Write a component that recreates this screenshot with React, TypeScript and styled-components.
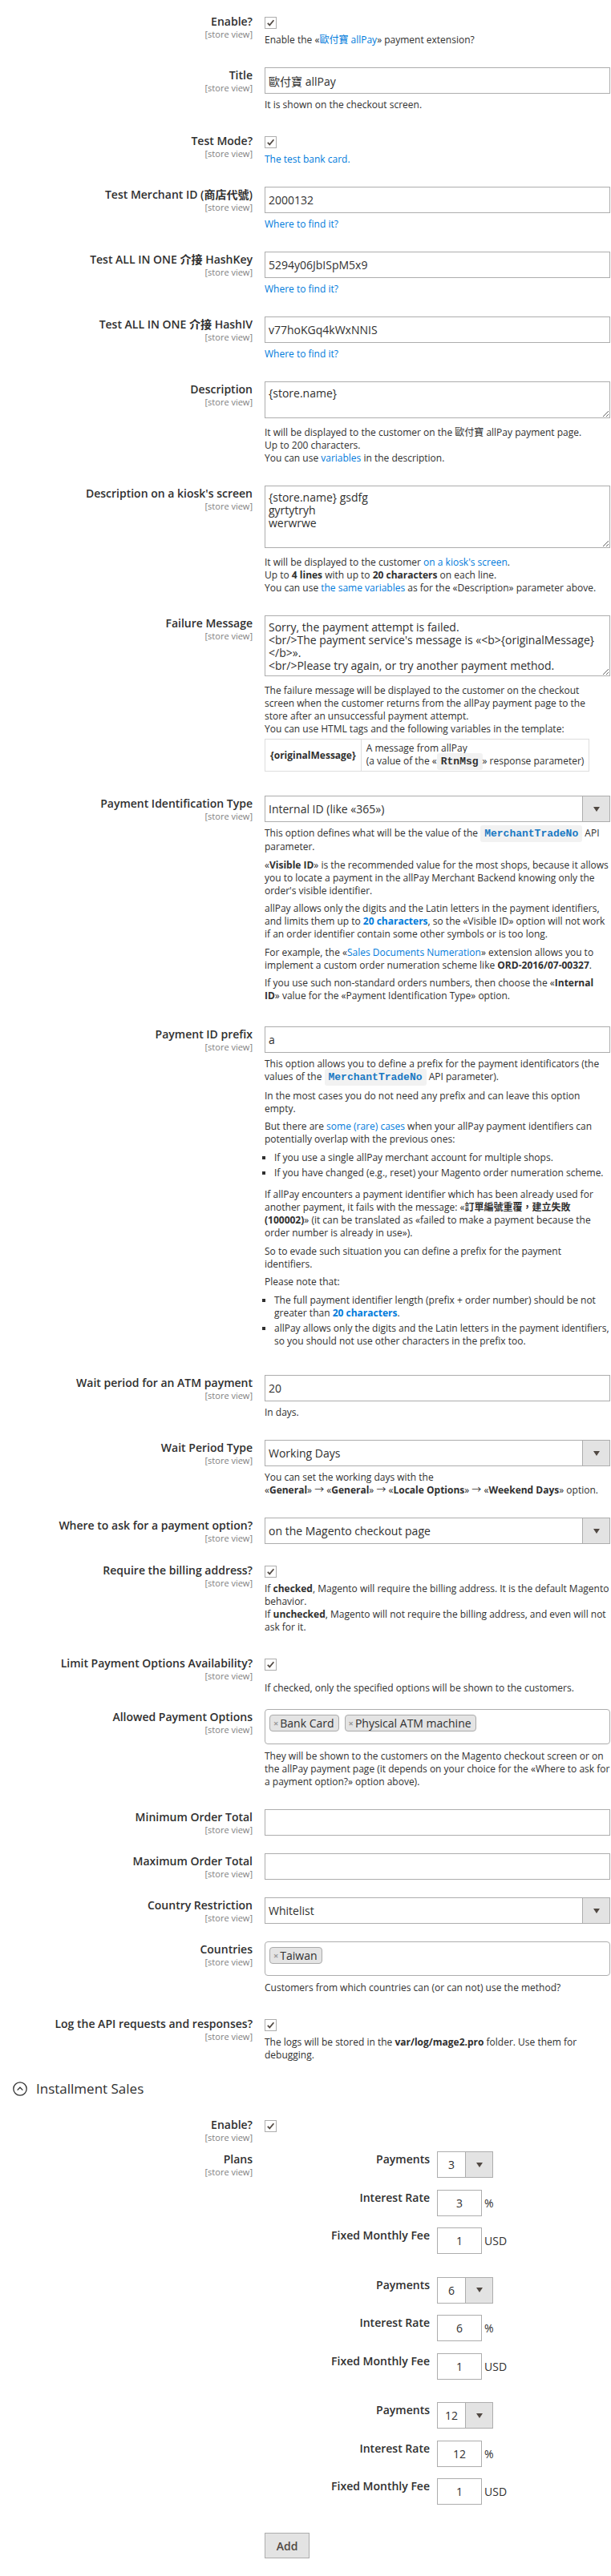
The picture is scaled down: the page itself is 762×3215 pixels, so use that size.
import React from 'react';
import styled, { createGlobalStyle } from 'styled-components';

const GlobalStyle = createGlobalStyle`
  html, body {
    margin: 0;
    padding: 0;
    background: #fff;
  }
  body {
    font-family: 'Open Sans', 'Noto Sans CJK TC', sans-serif;
    color: #303030;
  }
`;

const Page = styled.div`
  width: 762px;
  box-sizing: border-box;
  padding: 16px 1px 23px 0;
`;

const Row = styled.div<{ $gap?: number }>`
  display: grid;
  grid-template-columns: 315px 1fr;
  column-gap: 15px;
  padding-bottom: ${(p) => p.$gap ?? 22}px;
`;

const LabelCol = styled.div<{ $check?: boolean }>`
  text-align: right;
  padding-top: ${(p) => (p.$check ? 2 : 1)}px;
`;

const Label = styled.div`
  font-size: 14px;
  font-weight: 600;
  line-height: 18px;
  color: #303030;
`;

const Scope = styled.div`
  font-size: 11px;
  line-height: 13px;
  color: #808080;
`;

const Control = styled.div`
  display: flex;
  flex-direction: column;
  min-width: 0;
`;

const TextInput = styled.input`
  display: block;
  width: 100%;
  height: 33px;
  box-sizing: border-box;
  border: 1px solid #adadad;
  border-radius: 0;
  padding: 0 4px;
  margin: 0;
  font-family: 'Open Sans', 'Noto Sans CJK TC', sans-serif;
  font-size: 14px;
  color: #303030;
  background: #fff;
  outline: none;
`;

const TextArea = styled.textarea<{ $h: number }>`
  display: block;
  width: 100%;
  height: ${(p) => p.$h}px;
  box-sizing: border-box;
  border: 1px solid #adadad;
  border-radius: 0;
  padding: 6px 4px 4px;
  margin: 0 0 4px;
  font-family: 'Open Sans', 'Noto Sans CJK TC', sans-serif;
  font-size: 14px;
  line-height: 16px;
  color: #303030;
  white-space: pre;
  overflow: hidden;
  resize: vertical;
  outline: none;
`;

const Note = styled.div<{ $top?: number }>`
  margin: ${(p) => p.$top ?? 6}px 0 4px;
  font-size: 12px;
  line-height: 16px;
  color: #303030;

  p {
    margin: 0 0 6.5px;
  }
  p:last-child {
    margin-bottom: 4px;
  }
  ul {
    margin: 0 0 11px;
    padding-left: 12px;
    list-style-type: square;
  }
  ul:last-child {
    margin-bottom: 8px;
  }
  li {
    margin-bottom: 3.5px;
  }
  li:last-child {
    margin-bottom: 0;
  }
  b {
    font-weight: 700;
  }
`;

const Link = styled.a<{ $bold?: boolean }>`
  color: #007bdb;
  text-decoration: none;
  font-weight: ${(p) => (p.$bold ? 700 : 400)};
`;

const Code = styled.code<{ $blue?: boolean }>`
  font-family: 'Liberation Mono', monospace;
  font-size: 13px;
  font-weight: 700;
  color: ${(p) => (p.$blue ? '#1979c3' : '#303030')};
  background: #f2f2f2;
  padding: 3px 5px;
  border-radius: 3px;
`;

const VarTable = styled.table`
  border-collapse: collapse;
  margin: 4px 0;

  td {
    border: 1px solid #dedede;
    padding: 3px 6px;
    font-size: 12px;
    line-height: 16px;
    vertical-align: middle;
  }
  td:first-child {
    font-weight: 700;
  }
`;

const SelectBox = styled.div<{ $w?: number }>`
  display: flex;
  width: ${(p) => (p.$w ? `${p.$w}px` : '100%')};
  height: 33px;
  box-sizing: border-box;
  border: 1px solid #adadad;
  background: #fff;
`;

const SelectValue = styled.div<{ $center?: boolean }>`
  flex: 1;
  padding: 0 4px;
  font-size: 14px;
  line-height: 31px;
  color: #303030;
  text-align: ${(p) => (p.$center ? 'center' : 'left')};
  white-space: nowrap;
`;

const SelectArrow = styled.div`
  width: 33px;
  border-left: 1px solid #adadad;
  background: #e3e3e3;
  display: flex;
  align-items: center;
  justify-content: center;
`;

const CheckBox = styled.span`
  display: flex;
  align-items: center;
  justify-content: center;
  width: 15px;
  height: 15px;
  box-sizing: border-box;
  margin-top: 5px;
  border: 1px solid #adadad;
  background: #fff;
`;

const MultiBox = styled.div<{ $h: number }>`
  display: flex;
  flex-wrap: wrap;
  align-content: flex-start;
  gap: 7px;
  height: ${(p) => p.$h}px;
  box-sizing: border-box;
  padding: 6px 5px;
  border: 1px solid #adadad;
  border-radius: 4px;
  background: #fff;
`;

const Chip = styled.span`
  display: inline-flex;
  align-items: center;
  height: 21px;
  box-sizing: border-box;
  padding: 0 5px 0 4px;
  border: 1px solid #aaa;
  border-radius: 4px;
  background: #e4e4e4;
  font-size: 14px;
  color: #303030;
`;

const ChipX = styled.span`
  color: #999;
  font-size: 11px;
  font-weight: 700;
  margin-right: 2px;
`;

const SectionTitle = styled.div`
  display: flex;
  align-items: center;
  gap: 11px;
  padding-left: 16px;
  margin-bottom: 24px;
  font-size: 17px;
  line-height: 20px;
  color: #303030;
`;

const PlanList = styled.div`
  display: flex;
  flex-direction: column;
  gap: 28.5px;
`;

const Plan = styled.div`
  display: flex;
  flex-direction: column;
  gap: 14.5px;
`;

const PlanRow = styled.div`
  display: grid;
  grid-template-columns: 206px auto;
  column-gap: 9px;
  align-items: start;
`;

const PlanLabel = styled.div`
  text-align: right;
  font-size: 14px;
  font-weight: 600;
  line-height: 18px;
  padding-top: 1px;
  color: #303030;
`;

const PlanControl = styled.div`
  display: flex;
  align-items: center;
  gap: 3px;
`;

const SmallInput = styled(TextInput)`
  width: 56px;
  text-align: center;
`;

const Unit = styled.span`
  font-size: 14px;
  color: #303030;
`;

const AddButton = styled.button`
  display: block;
  width: 56px;
  height: 32px;
  margin-top: 35px;
  padding: 0;
  border: 1px solid #adadad;
  border-radius: 0;
  background: #e3e3e3;
  font-family: 'Open Sans', sans-serif;
  font-size: 14px;
  font-weight: 600;
  color: #514943;
`;

const Arrow = () => (
  <svg width="8" height="6" viewBox="0 0 8 6">
    <polygon points="0,0 8,0 4,6" fill="#514943" />
  </svg>
);

const Check = () => (
  <svg width="11" height="11" viewBox="0 0 11 11">
    <polyline points="1.8,5.8 4.3,8.4 9.4,2.2" fill="none" stroke="#514943" strokeWidth="1.7" />
  </svg>
);

const Select: React.FC<{ value: string; w?: number; center?: boolean }> = ({ value, w, center }) => (
  <SelectBox $w={w}>
    <SelectValue $center={center}>{value}</SelectValue>
    <SelectArrow>
      <Arrow />
    </SelectArrow>
  </SelectBox>
);

const Field: React.FC<{
  label: React.ReactNode;
  check?: boolean;
  gap?: number;
  children?: React.ReactNode;
}> = ({ label, check, gap, children }) => (
  <Row $gap={gap}>
    <LabelCol $check={check}>
      <Label>{label}</Label>
      <Scope>[store view]</Scope>
    </LabelCol>
    <Control>{children}</Control>
  </Row>
);

const plans = [
  { payments: '3', rate: '3', fee: '1' },
  { payments: '6', rate: '6', fee: '1' },
  { payments: '12', rate: '12', fee: '1' },
];

const App: React.FC = () => {
  return (
    <Page>
      <GlobalStyle />

      <Field label="Enable?" check>
        <CheckBox><Check /></CheckBox>
        <Note>
          Enable the «<Link>歐付寶 allPay</Link>» payment extension?
        </Note>
      </Field>

      <Field label="Title">
        <TextInput defaultValue="歐付寶 allPay" />
        <Note>It is shown on the checkout screen.</Note>
      </Field>

      <Field label="Test Mode?" check>
        <CheckBox><Check /></CheckBox>
        <Note>
          <Link>The test bank card.</Link>
        </Note>
      </Field>

      <Field label="Test Merchant ID (商店代號)">
        <TextInput defaultValue="2000132" />
        <Note><Link>Where to find it?</Link></Note>
      </Field>

      <Field label="Test ALL IN ONE 介接 HashKey">
        <TextInput defaultValue="5294y06JbISpM5x9" />
        <Note><Link>Where to find it?</Link></Note>
      </Field>

      <Field label="Test ALL IN ONE 介接 HashIV">
        <TextInput defaultValue="v77hoKGq4kWxNNIS" />
        <Note><Link>Where to find it?</Link></Note>
      </Field>

      <Field label="Description">
        <TextArea $h={46} defaultValue="{store.name}" />
        <Note>
          It will be displayed to the customer on the 歐付寶 allPay payment page.
          <br />
          Up to 200 characters.
          <br />
          You can use <Link>variables</Link> in the description.
        </Note>
      </Field>

      <Field label="Description on a kiosk's screen">
        <TextArea $h={78} defaultValue={'{store.name} gsdfg\ngyrtytryh\nwerwrwe'} />
        <Note>
          It will be displayed to the customer <Link>on a kiosk's screen</Link>.
          <br />
          Up to <b>4 lines</b> with up to <b>20 characters</b> on each line.
          <br />
          You can use <Link>the same variables</Link> as for the «Description» parameter above.
        </Note>
      </Field>

      <Field label="Failure Message">
        <TextArea
          $h={76}
          wrap="off"
          defaultValue={
            'Sorry, the payment attempt is failed.\n<br/>The payment service\'s message is «<b>{originalMessage}\n</b>».\n<br/>Please try again, or try another payment method.'
          }
        />
        <Note>
          The failure message will be displayed to the customer on the checkout screen when the
          customer returns from the allPay payment page to the store after an unsuccessful payment
          attempt.
          <br />
          You can use HTML tags and the following variables in the template:
          <VarTable>
            <tbody>
              <tr>
                <td>{'{originalMessage}'}</td>
                <td>
                  A message from allPay
                  <br />
                  (a value of the «<Code>RtnMsg</Code>» response parameter)
                </td>
              </tr>
            </tbody>
          </VarTable>
        </Note>
      </Field>

      <Field label="Payment Identification Type">
        <Select value="Internal ID (like «365»)" />
        <Note>
          <p>
            This option defines what will be the value of the <Code $blue>MerchantTradeNo</Code> API
            parameter.
          </p>
          <p>
            «<b>Visible ID</b>» is the recommended value for the most shops, because it allows you
            to locate a payment in the allPay Merchant Backend knowing only the order's visible
            identifier.
          </p>
          <p>
            allPay allows only the digits and the Latin letters in the payment identifiers, and
            limits them up to <Link $bold>20 characters</Link>, so the «Visible ID» option will not
            work if an order identifier contain some other symbols or is too long.
          </p>
          <p>
            For example, the «<Link>Sales Documents Numeration</Link>» extension allows you to
            implement a custom order numeration scheme like <b>ORD-2016/07-00327</b>.
          </p>
          <p>
            If you use such non-standard orders numbers, then choose the «<b>Internal ID</b>» value
            for the «Payment Identification Type» option.
          </p>
        </Note>
      </Field>

      <Field label="Payment ID prefix">
        <TextInput defaultValue="a" />
        <Note>
          <p>
            This option allows you to define a prefix for the payment identificators (the values of
            the <Code $blue>MerchantTradeNo</Code> API parameter).
          </p>
          <p>In the most cases you do not need any prefix and can leave this option empty.</p>
          <p>
            But there are <Link>some (rare) cases</Link> when your allPay payment identifiers can
            potentially overlap with the previous ones:
          </p>
          <ul>
            <li>If you use a single allPay merchant account for multiple shops.</li>
            <li>If you have changed (e.g., reset) your Magento order numeration scheme.</li>
          </ul>
          <p>
            If allPay encounters a payment identifier which has been already used for another
            payment, it fails with the message: «<b>訂單編號重覆，建立失敗 (100002)</b>» (it can be
            translated as «failed to make a payment because the order number is already in use»).
          </p>
          <p>So to evade such situation you can define a prefix for the payment identifiers.</p>
          <p>Please note that:</p>
          <ul>
            <li>
              The full payment identifier length (prefix + order number) should be not greater than{' '}
              <Link $bold>20 characters</Link>.
            </li>
            <li>
              allPay allows only the digits and the Latin letters in the payment identifiers, so you
              should not use other characters in the prefix too.
            </li>
          </ul>
        </Note>
      </Field>

      <Field label="Wait period for an ATM payment">
        <TextInput defaultValue="20" />
        <Note>In days.</Note>
      </Field>

      <Field label="Wait Period Type">
        <Select value="Working Days" />
        <Note>
          You can set the working days with the
          <br />
          «<b>General</b>» → «<b>General</b>» → «<b>Locale Options</b>» → «<b>Weekend Days</b>»
          option.
        </Note>
      </Field>

      <Field label="Where to ask for a payment option?">
        <Select value="on the Magento checkout page" />
      </Field>

      <Field label="Require the billing address?" check>
        <CheckBox><Check /></CheckBox>
        <Note>
          If <b>checked</b>, Magento will require the billing address. It is the default Magento
          behavior.
          <br />
          If <b>unchecked</b>, Magento will not require the billing address, and even will not ask
          for it.
        </Note>
      </Field>

      <Field label="Limit Payment Options Availability?" check gap={14}>
        <CheckBox><Check /></CheckBox>
        <Note $top={14}>If checked, only the specified options will be shown to the customers.</Note>
      </Field>

      <Field label="Allowed Payment Options">
        <MultiBox $h={44}>
          <Chip><ChipX>×</ChipX>Bank Card</Chip>
          <Chip><ChipX>×</ChipX>Physical ATM machine</Chip>
        </MultiBox>
        <Note $top={7}>
          They will be shown to the customers on the Magento checkout screen or on the allPay
          payment page (it depends on your choice for the «Where to ask for a payment option?»
          option above).
        </Note>
      </Field>

      <Field label="Minimum Order Total">
        <TextInput defaultValue="" />
      </Field>

      <Field label="Maximum Order Total">
        <TextInput defaultValue="" />
      </Field>

      <Field label="Country Restriction">
        <Select value="Whitelist" />
      </Field>

      <Field label="Countries">
        <MultiBox $h={43}>
          <Chip><ChipX>×</ChipX>Taiwan</Chip>
        </MultiBox>
        <Note $top={7}>Customers from which countries can (or can not) use the method?</Note>
      </Field>

      <Field label="Log the API requests and responses?" check gap={20}>
        <CheckBox><Check /></CheckBox>
        <Note>
          The logs will be stored in the <b>var/log/mage2.pro</b> folder. Use them for debugging.
        </Note>
      </Field>

      <SectionTitle>
        <svg width="18" height="18" viewBox="0 0 18 18">
          <circle cx="9" cy="9" r="8.2" fill="none" stroke="#303030" strokeWidth="1.3" />
          <polyline points="5.6,10.6 9,7.2 12.4,10.6" fill="none" stroke="#303030" strokeWidth="1.3" />
        </svg>
        Installment Sales
      </SectionTitle>

      <Field label="Enable?" check gap={11}>
        <CheckBox><Check /></CheckBox>
      </Field>

      <Field label="Plans">
        <PlanList>
          {plans.map((plan) => (
            <Plan key={plan.payments}>
              <PlanRow>
                <PlanLabel>Payments</PlanLabel>
                <PlanControl>
                  <Select value={plan.payments} w={70} center />
                </PlanControl>
              </PlanRow>
              <PlanRow>
                <PlanLabel>Interest Rate</PlanLabel>
                <PlanControl>
                  <SmallInput defaultValue={plan.rate} />
                  <Unit>%</Unit>
                </PlanControl>
              </PlanRow>
              <PlanRow>
                <PlanLabel>Fixed Monthly Fee</PlanLabel>
                <PlanControl>
                  <SmallInput defaultValue={plan.fee} />
                  <Unit>USD</Unit>
                </PlanControl>
              </PlanRow>
            </Plan>
          ))}
        </PlanList>
        <AddButton>Add</AddButton>
      </Field>
    </Page>
  );
};

export default App;
